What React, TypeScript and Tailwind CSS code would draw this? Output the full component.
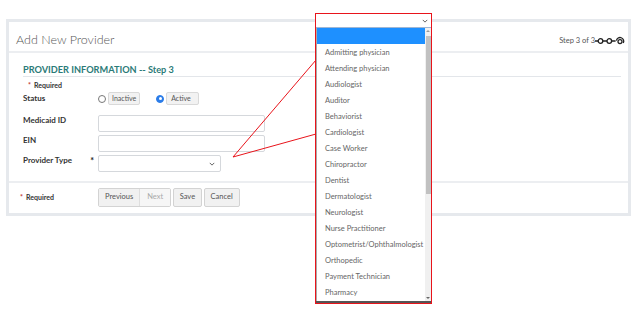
import React from "react";

const providerTypes = [
  "Admitting physician",
  "Attending physician",
  "Audiologist",
  "Auditor",
  "Behaviorist",
  "Cardiologist",
  "Case Worker",
  "Chiropractor",
  "Dentist",
  "Dermatologist",
  "Neurologist",
  "Nurse Practitioner",
  "Optometrist/Ophthalmologist",
  "Orthopedic",
  "Payment Technician",
  "Pharmacy",
];

function Chevron({ className }: { className?: string }) {
  return (
    <svg viewBox="0 0 8 5" className={className} fill="none" stroke="#555" strokeWidth="1.2">
      <path d="M1 1l3 3 3-3" />
    </svg>
  );
}

function StepIcon() {
  return (
    <svg width="32" height="12" viewBox="0 0 32 12" fill="none" stroke="#222" strokeWidth="1.3">
      <path d="M0 6h3.2M7.8 6h4.2M16.6 6h4" />
      <circle cx="5.5" cy="6" r="2.3" />
      <circle cx="14.3" cy="6" r="2.3" />
      <circle cx="25" cy="6.6" r="2" />
      <path d="M21.4 5.6a3.7 3.7 0 1 1 6.9 2.4" />
    </svg>
  );
}

function Radio({ checked }: { checked?: boolean }) {
  return checked ? (
    <span className="flex h-[8px] w-[8px] items-center justify-center rounded-full border border-[#2b7de9] bg-[#2b7de9]">
      <span className="h-[3px] w-[3px] rounded-full bg-white" />
    </span>
  ) : (
    <span className="h-[8px] w-[8px] rounded-full border border-[#777] bg-white" />
  );
}

function Row({
  label,
  star,
  center,
  className,
  children,
}: {
  label: string;
  star?: boolean;
  center?: boolean;
  className?: string;
  children: React.ReactNode;
}) {
  return (
    <div className={`flex ${center ? "items-center" : "items-start"} ${className ?? ""}`}>
      <div className="flex w-[75px] items-center justify-between pr-[4px] text-[8px] font-bold leading-[11px] text-[#333]">
        <span>{label}</span>
        {star && <span className="text-[9px] text-[#222]">*</span>}
      </div>
      {children}
    </div>
  );
}

export default function App() {
  return (
    <div
      className="relative h-[310px] w-[634px] overflow-hidden bg-white pl-[6px] pt-[19px]"
      style={{ fontFamily: "Lato, 'Open Sans', sans-serif" }}
    >
      <div className="w-[625px] border-[3px] border-[#e6e9ed] bg-white">
        <div className="flex h-[29px] items-center justify-between pl-[7px] pr-[1px] pt-[8px]">
          <h1 className="text-[12.5px] font-light text-[#555]">Add New Provider</h1>
          <div className="flex items-center text-[7.5px] text-[#555]">
            <span>Step 3 of 3</span>
            <StepIcon />
          </div>
        </div>

        <div className="border-t-2 border-[#eceef1] px-[14px] pb-[9px]">
          <div className="mr-[-7px] mt-[10px] h-[14px] border-b border-[#e3e6ea] text-[9.2px] font-bold leading-[13px] text-[#2b7b78]">
            PROVIDER INFORMATION -- Step 3
          </div>
          <div className="mt-[3px] flex h-[10px] items-center gap-[3px] pl-[5px] text-[7px] font-bold text-[#333]">
            <span className="text-[#c0392b]">*</span>
            <span>Required</span>
          </div>

          <Row label="Status" center className="mt-[2px] h-[13px]">
            <div className="flex items-center text-[7px] text-[#555]">
              <Radio />
              <span className="ml-[2px] flex h-[13px] items-center rounded-[2px] border border-[#d9d9d9] bg-[#f2f2f2] px-[3px]">
                Inactive
              </span>
              <span className="ml-[16px]">
                <Radio checked />
              </span>
              <span className="ml-[2px] flex h-[13px] items-center rounded-[2px] border border-[#d9d9d9] bg-[#f2f2f2] pl-[4px] pr-[7px]">
                Active
              </span>
            </div>
          </Row>
          <Row label="Medicaid ID" className="mt-[10px]">
            <div className="h-[17px] w-[167px] rounded-[2px] border border-[#d5d8dc] bg-white" />
          </Row>
          <Row label="EIN" className="mt-[3px]">
            <div className="h-[17px] w-[167px] rounded-[2px] border border-[#d5d8dc] bg-white" />
          </Row>
          <Row label="Provider Type" star className="mt-[3px]">
            <div className="flex h-[17px] w-[123px] items-center justify-end rounded-[2px] border border-[#d5d8dc] bg-white pr-[5px]">
              <Chevron className="h-[4px] w-[6px]" />
            </div>
          </Row>
        </div>

        <div className="flex h-[32px] items-center border-t-2 border-[#eceef1] pb-[2px] pl-[11px]">
          <div className="flex w-[78px] items-center gap-[3px] text-[7px] font-bold text-[#333]">
            <span className="text-[#c0392b]">*</span>
            <span>Required</span>
          </div>
          <div className="flex items-center gap-[2px] text-[7.5px] text-[#555]">
            <div className="flex h-[19px] overflow-hidden rounded-[2px] border border-[#d3d3d3]">
              <span className="flex items-center bg-[#f1f1f1] px-[6px]">Previous</span>
              <span className="flex items-center border-l border-[#dedede] bg-[#f6f6f6] px-[7px] text-[#aaa]">Next</span>
            </div>
            <span className="flex h-[19px] items-center rounded-[2px] border border-[#d3d3d3] bg-[#f1f1f1] px-[5.5px]">
              Save
            </span>
            <span className="flex h-[19px] items-center rounded-[2px] border border-[#d3d3d3] bg-[#f1f1f1] px-[6px]">
              Cancel
            </span>
          </div>
        </div>
      </div>

      <svg className="pointer-events-none absolute left-0 top-0" width="634" height="310" fill="none" stroke="#e8141b" strokeWidth="1">
        <path d="M233 157L316 60M233 157L316 134" />
      </svg>

      <div className="absolute left-[315px] top-[13px] w-[117px] border border-[#e8141b] bg-white">
        <div className="flex h-[14px] items-center justify-end border-b border-[#9fb6d3] pr-[3px]">
          <Chevron className="h-[4px] w-[6px]" />
        </div>
        <div className="flex border-b-2 border-[#555]">
          <div className="flex-1 border-l border-[#aaa] pb-[1px]">
            <div className="h-[16px] bg-[#1e90ff]" />
            {providerTypes.map((t) => (
              <div key={t} className="flex h-[16px] items-center pl-[8px] pt-[2px] text-[7.5px] text-[#666]">
                {t}
              </div>
            ))}
          </div>
          <div className="relative w-[6px] bg-[#f0f0f0]">
            <div className="absolute left-[1px] top-[8px] h-[158px] w-[5px] bg-[#c1c1c1]" />
            <div className="absolute left-[1px] top-[2px] border-x-[2px] border-b-[2px] border-x-transparent border-b-[#999]" />
            <div className="absolute bottom-[2px] left-[1px] border-x-[2px] border-t-[2px] border-x-transparent border-t-[#666]" />
          </div>
        </div>
      </div>
    </div>
  );
}
